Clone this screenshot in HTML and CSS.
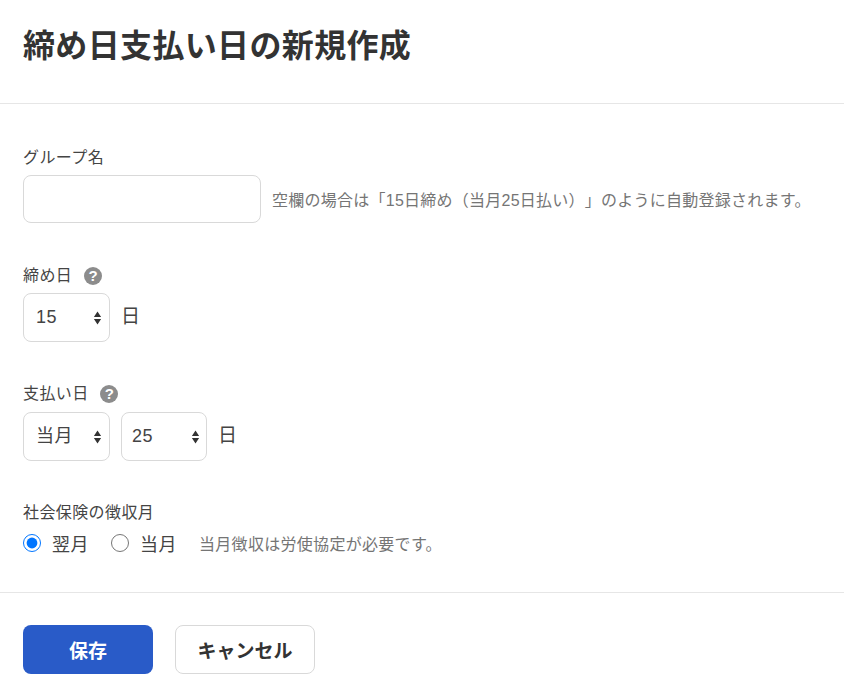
FILE: index.html
```html
<!DOCTYPE html>
<html lang="ja">
<head>
    <meta charset="UTF-8">
    <title>締め日支払い日の新規作成</title>
    <link rel="stylesheet" href="styles.css">
</head>
<body>
<header class="page-header">
    <h1>締め日支払い日の新規作成</h1>
</header>
<form class="form-body">
    <div class="field field-name">
        <label class="field-label">グループ名</label>
        <div class="field-row">
            <input type="text" class="text-input">
            <span class="hint hint-long">空欄の場合は「15日締め（当月25日払い）」のように自動登録されます。</span>
        </div>
    </div>
    <div class="field field-closing">
        <label class="field-label">締め日 <span class="help">?</span></label>
        <div class="field-row">
            <div class="select">15<svg class="updown" viewBox="0 0 8 14"><path d="M4 0.5 L7.6 6 H0.4 Z M4 13.5 L0.4 8 H7.6 Z"/></svg></div>
            <span class="unit">日</span>
        </div>
    </div>
    <div class="field field-payment">
        <label class="field-label">支払い日 <span class="help">?</span></label>
        <div class="field-row">
            <div class="select">当月<svg class="updown" viewBox="0 0 8 14"><path d="M4 0.5 L7.6 6 H0.4 Z M4 13.5 L0.4 8 H7.6 Z"/></svg></div>
            <div class="select select-narrow">25<svg class="updown" viewBox="0 0 8 14"><path d="M4 0.5 L7.6 6 H0.4 Z M4 13.5 L0.4 8 H7.6 Z"/></svg></div>
            <span class="unit">日</span>
        </div>
    </div>
    <div class="field field-insurance">
        <label class="field-label">社会保険の徴収月</label>
        <div class="radio-row">
            <label class="radio"><input type="radio" name="month" checked>翌月</label>
            <label class="radio"><input type="radio" name="month">当月</label>
            <span class="hint">当月徴収は労使協定が必要です。</span>
        </div>
    </div>
</form>
<footer class="page-footer">
    <button type="button" class="btn btn-primary">保存</button>
    <button type="button" class="btn btn-default">キャンセル</button>
</footer>
</body>
</html>
```
FILE: styles.css
```css
* {
    box-sizing: border-box;
}
body {
    margin: 0;
    font-family: "Liberation Sans", "Noto Sans CJK JP", sans-serif;
    color: #333;
    background: white;
    text-spacing-trim: space-all;
}
.page-header {
    height: 104px;
    padding: 24px 23px 0;
    border-bottom: 1px solid #e6e6e6;
}
h1 {
    margin: 0;
    font-size: 32px;
    line-height: 44px;
    font-weight: 700;
    letter-spacing: 0.35px;
}
.form-body {
    padding: 0 23px;
    height: 488px;
}
.field-label {
    display: block;
    font-size: 16px;
    line-height: 24px;
    letter-spacing: 0.4px;
    color: #444;
}
.field-row {
    display: flex;
    align-items: center;
}
.field-name {
    padding-top: 42px;
}
.field-name .field-row {
    margin-top: 5px;
}
.field-closing {
    padding-top: 41px;
}
.field-closing .field-row {
    margin-top: 5px;
}
.field-payment {
    padding-top: 40px;
}
.field-payment .field-row {
    margin-top: 6px;
}
.field-insurance {
    padding-top: 40px;
}
.text-input {
    width: 238px;
    height: 48px;
    border: 1px solid #d9d9d9;
    border-radius: 8px;
    background: white;
}
.hint {
    margin-left: 11px;
    font-size: 16px;
    letter-spacing: 0.3px;
    color: #757575;
}
.hint-long {
    letter-spacing: 0.25px;
}
.select {
    position: relative;
    width: 87px;
    height: 49px;
    margin-right: 11px;
    padding-left: 12px;
    border: 1px solid #d9d9d9;
    border-radius: 8px;
    font-size: 18px;
    letter-spacing: 0.5px;
    line-height: 46px;
    color: #444;
}
.select-narrow {
    width: 86px;
    padding-left: 10px;
}
.updown {
    position: absolute;
    right: 7px;
    top: 17px;
    width: 9px;
    height: 14px;
    fill: #333;
}
.select-narrow .updown {
    right: 6px;
}
.unit {
    margin-top: -6px;
    font-size: 19px;
    color: #444;
}
.help {
    display: inline-block;
    width: 18px;
    height: 18px;
    margin-left: 7px;
    border-radius: 50%;
    background: #8c8c8c;
    color: white;
    font-size: 15px;
    font-weight: 700;
    line-height: 18px;
    text-align: center;
    letter-spacing: 0;
}
.radio-row {
    display: flex;
    align-items: center;
    margin-top: 5px;
}
.radio {
    display: flex;
    align-items: center;
    margin-right: 22px;
    font-size: 18px;
    letter-spacing: 0.5px;
    color: #444;
}
.radio input {
    width: 18px;
    height: 18px;
    margin: 0 11px 0 0;
    accent-color: #0075ff;
}
.radio-row .hint {
    margin-left: 0;
}
.page-footer {
    display: flex;
    gap: 22px;
    padding: 32px 23px 0;
    border-top: 1px solid #e6e6e6;
}
.btn {
    height: 49px;
    border-radius: 8px;
    font-family: inherit;
    font-size: 19px;
    font-weight: 700;
}
.btn-primary {
    width: 130px;
    border: none;
    background: #295bc8;
    color: white;
}
.btn-default {
    width: 140px;
    border: 1px solid #d9d9d9;
    background: white;
    color: #333;
}
```
